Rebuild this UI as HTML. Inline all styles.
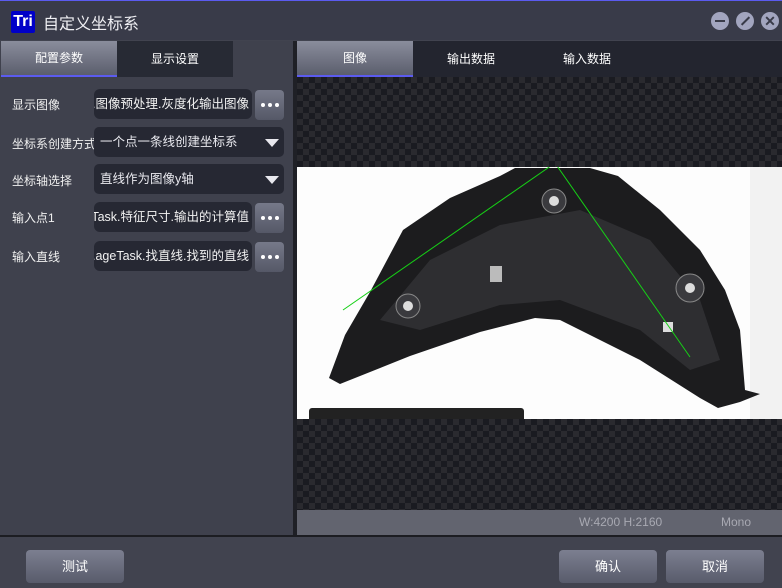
<!DOCTYPE html>
<html><head><meta charset="utf-8"><style>
*{margin:0;padding:0;box-sizing:border-box}
body{width:782px;height:588px;overflow:hidden;background:#41434f;font-family:"Liberation Sans","Noto Sans CJK SC",sans-serif;color:#e8e8ee;position:relative;font-size:12px}
.abs{position:absolute}
.title{left:0;top:0;width:782px;height:40px;background:#393b49;border-top:1px solid #5b5bf0}
.logo{left:11px;top:11px;width:24px;height:22px;background:#0000c8;color:#fff;font-weight:bold;font-size:16px;line-height:22px;text-align:center;border-radius:2px}
.ttext{left:43px;top:10px;font-size:16px;color:#f0f0f4}
.wb{top:12px;width:18px;height:18px;border-radius:50%;background:#a2a5bf}
.left{left:0;top:41px;width:293px;height:494px;background:#3f414d}
.tabon{background:linear-gradient(#8a8d9c,#5b5e6d);border-bottom:2px solid #5b5bf0;text-align:center;color:#fff;line-height:34px;font-size:12px}
.tab{background:#272a34;text-align:center;color:#fff;line-height:36px}
.lbl{left:12px;font-size:12px;color:#f0f0f0}
.fld{left:94px;width:158px;height:30px;background:#262833;border-radius:6px;overflow:hidden;white-space:nowrap;line-height:30px;font-size:12.5px;color:#f2f2f2;display:flex;justify-content:flex-end;padding-right:3px}
.fld span{flex:none}
.sel{left:94px;width:190px;height:30px;background:#262833;border-radius:5px;line-height:30px;padding-left:6px;font-size:12.5px}
.sel:after{content:"";position:absolute;right:5px;top:12px;border-left:7px solid transparent;border-right:7px solid transparent;border-top:8px solid #e8e8ee}
.dot{left:255px;width:29px;height:30px;background:linear-gradient(#767989,#555867);border-radius:4px}
.dot i{position:absolute;top:13px;width:4px;height:4px;border-radius:50%;background:#fff}
.right{left:297px;top:41px;width:485px;height:494px;background:#1b1c22}
.chk{background-color:#1a1b21;background-image:linear-gradient(45deg,#2a2a2f 25%,transparent 25%,transparent 75%,#2a2a2f 75%),linear-gradient(45deg,#2a2a2f 25%,transparent 25%,transparent 75%,#2a2a2f 75%);background-size:12px 12px;background-position:0 0,6px 6px}
.status{left:297px;top:510px;width:485px;height:25px;background:#62646f;color:#a8a9b2;font-size:12px;line-height:25px}
.btn{top:550px;width:98px;height:33px;border-radius:4px;background:linear-gradient(#7c7f90,#585b6b);color:#fff;text-align:center;line-height:33px;font-size:13px}
</style></head><body>
<div class="abs title"></div>
<div class="abs logo">Tri</div>
<div class="abs ttext">自定义坐标系</div>
<div class="abs wb" style="left:711px"><div style="position:absolute;left:4px;top:8px;width:10px;height:2px;background:#393b49"></div></div>
<div class="abs wb" style="left:736px"><div style="position:absolute;left:4px;top:8px;width:11px;height:2px;background:#393b49;transform:rotate(-45deg)"></div></div>
<div class="abs wb" style="left:761px;font-weight:bold;color:#393b49;text-align:center;line-height:18px;font-size:14px">✕</div>
<div class="abs" style="left:0;top:535px;width:782px;height:2px;background:#1c1d22"></div>

<div class="abs left"></div>
<div class="abs tabon" style="left:1px;top:41px;width:116px;height:36px">配置参数</div>
<div class="abs tab" style="left:117px;top:41px;width:116px;height:36px">显示设置</div>
<div class="abs" style="left:293px;top:41px;width:4px;height:494px;background:#1f2026"></div>

<div class="abs lbl" style="top:96px">显示图像</div>
<div class="abs fld" style="top:89px"><span>...图像预处理.灰度化输出图像</span></div>
<div class="abs dot" style="top:90px"><i style="left:6px"></i><i style="left:13px"></i><i style="left:20px"></i></div>
<div class="abs lbl" style="top:135px;width:82px;overflow:hidden;white-space:nowrap">坐标系创建方式</div>
<div class="abs sel" style="top:127px">一个点一条线创建坐标系</div>
<div class="abs lbl" style="top:172px">坐标轴选择</div>
<div class="abs sel" style="top:164px">直线作为图像y轴</div>
<div class="abs lbl" style="top:209px">输入点1</div>
<div class="abs fld" style="top:202px"><span>...Task.特征尺寸.输出的计算值</span></div>
<div class="abs dot" style="top:203px"><i style="left:6px"></i><i style="left:13px"></i><i style="left:20px"></i></div>
<div class="abs lbl" style="top:248px">输入直线</div>
<div class="abs fld" style="top:241px"><span>...ageTask.找直线.找到的直线</span></div>
<div class="abs dot" style="top:242px"><i style="left:6px"></i><i style="left:13px"></i><i style="left:20px"></i></div>

<div class="abs right"></div>
<div class="abs" style="left:297px;top:41px;width:485px;height:36px;background:#23252f"></div>
<div class="abs tabon" style="left:297px;top:41px;width:116px;height:36px">图像</div>
<div class="abs tab" style="left:413px;top:41px;width:116px;height:36px;background:transparent">输出数据</div>
<div class="abs tab" style="left:529px;top:41px;width:116px;height:36px;background:transparent">输入数据</div>
<div class="abs chk" style="left:297px;top:77px;width:485px;height:433px"></div>
<svg class="abs" style="left:297px;top:167px" width="485" height="252" viewBox="297 167 485 252">
<rect x="297" y="167" width="485" height="252" fill="#fdfdfd"/>
<rect x="750" y="167" width="32" height="252" fill="#f2f2f2"/>
<path d="M329,378 L345,335 L370,292 L403,230 L450,198 L500,176 L515,168 L590,168 L618,176 L660,210 L700,250 L725,290 L740,330 L745,390 L760,394 L740,402 L718,408 L700,398 L640,360 L560,320 L535,318 L480,332 L410,356 L340,384 Z" fill="#1c1c1e"/>
<path d="M380,320 L430,260 L500,225 L580,210 L650,240 L700,300 L720,360 L690,370 L640,330 L560,300 L500,305 L420,330 Z" fill="#2e2e31"/>
<circle cx="408" cy="306" r="12" fill="#3a3a3e" stroke="#888" stroke-width="1"/><circle cx="408" cy="306" r="5" fill="#ddd"/>
<circle cx="554" cy="201" r="12" fill="#3a3a3e" stroke="#888" stroke-width="1"/><circle cx="554" cy="201" r="5" fill="#ddd"/>
<circle cx="690" cy="288" r="14" fill="#3a3a3e" stroke="#888" stroke-width="1"/><circle cx="690" cy="288" r="5" fill="#ddd"/>
<rect x="490" y="266" width="12" height="16" fill="#bbb"/>
<rect x="663" y="322" width="10" height="10" fill="#ddd"/>
<rect x="309" y="408" width="215" height="14" rx="3" fill="#222"/>
<polyline points="343,310 555,163 690,357" fill="none" stroke="#16d016" stroke-width="1"/>
</svg>
<div class="abs status"><span style="position:absolute;left:282px">W:4200 H:2160</span><span style="position:absolute;left:424px">Mono</span></div>

<div class="abs btn" style="left:26px">测试</div>
<div class="abs btn" style="left:559px">确认</div>
<div class="abs btn" style="left:666px">取消</div>
</body></html>
